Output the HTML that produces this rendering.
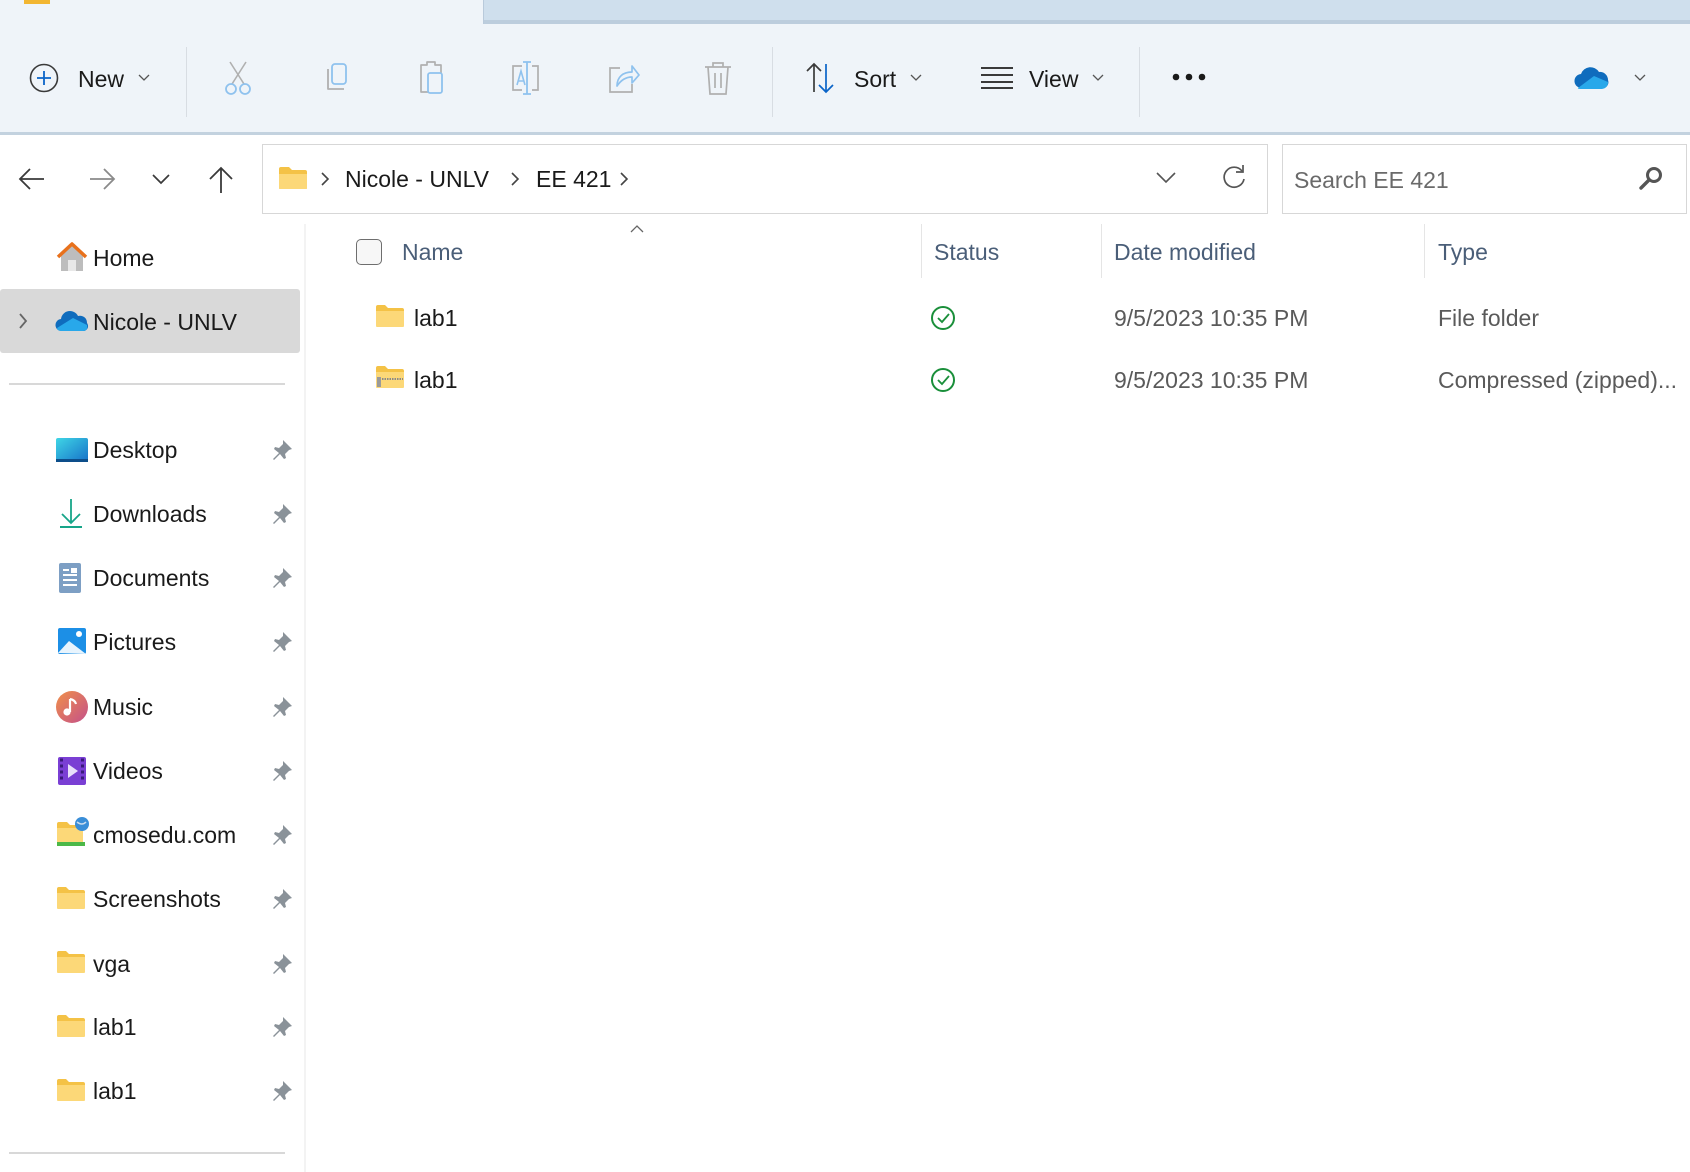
<!DOCTYPE html>
<html><head><meta charset="utf-8"><style>
*{margin:0;padding:0;box-sizing:border-box}
body{width:1690px;height:1172px;overflow:hidden;background:#fff;font-family:"Liberation Sans",sans-serif;font-size:23px;color:#1a1a1a;position:relative}
.a{position:absolute}
.t{position:absolute;line-height:30px;white-space:nowrap}
.sep{position:absolute;width:1px;background:#d8dde3}
.pin{position:absolute;left:271px;width:22px;height:22px}
.fold{position:absolute;width:28px;height:22px}
</style></head><body>
<!-- tab strip -->
<div class="a" style="left:0;top:0;width:1690px;height:24px;background:#cfdfed"></div>
<div class="a" style="left:0;top:-10px;width:484px;height:34px;background:#eff4f9;border-radius:0 0 0 0;border-right:1px solid #b9cadb"></div>
<div class="a" style="left:484px;top:20px;width:1206px;height:4px;background:#bccddd"></div>
<div class="a" style="left:24px;top:0;width:26px;height:4px;background:#f2b632"></div>
<!-- toolbar -->
<div class="a" style="left:0;top:24px;width:1690px;height:108px;background:#eff4f9"></div>
<div class="a" style="left:0;top:132px;width:1690px;height:3px;background:#c3d2df"></div>
<svg class="a" style="left:28px;top:62px" width="32" height="32" viewBox="0 0 32 32"><circle cx="16" cy="16" r="13.5" fill="none" stroke="#3a3a3a" stroke-width="1.6"/><path d="M16 9v14M9 16h14" stroke="#0a64c8" stroke-width="1.8"/></svg>
<div class="t" style="left:78px;top:64px">New</div>
<svg class="a" style="left:138px;top:74px" width="12" height="8"><path d="M1 1l5 5 5-5" fill="none" stroke="#555" stroke-width="1.3"/></svg>
<div class="sep" style="left:186px;top:47px;height:70px"></div>
<!-- cut -->
<svg class="a" style="left:222px;top:60px" width="32" height="36" viewBox="0 0 32 36"><path d="M8 2l14 22M24 2L10 24" stroke="#b0b0b0" stroke-width="1.6" fill="none"/><circle cx="9" cy="29" r="5" fill="none" stroke="#8fc2ee" stroke-width="1.8"/><circle cx="23" cy="29" r="5" fill="none" stroke="#8fc2ee" stroke-width="1.8"/></svg>
<!-- copy -->
<svg class="a" style="left:320px;top:62px" width="32" height="32" viewBox="0 0 32 32"><path d="M8 7v20h16" fill="none" stroke="#b0b0b0" stroke-width="1.8" stroke-linejoin="round"/><rect x="12" y="2" width="14" height="20" rx="3" fill="none" stroke="#8fc2ee" stroke-width="1.8"/></svg>
<!-- paste -->
<svg class="a" style="left:414px;top:60px" width="34" height="36" viewBox="0 0 34 36"><path d="M7 5h6v-3h8v3h6v27H7z" fill="none" stroke="#b0b0b0" stroke-width="1.7" stroke-linejoin="round"/><rect x="14" y="13" width="14" height="20" rx="2" fill="#eff4f9" stroke="#8fc2ee" stroke-width="1.8"/></svg>
<!-- rename -->
<svg class="a" style="left:508px;top:60px" width="36" height="36" viewBox="0 0 36 36"><path d="M14 6H5v24h9M24 6h6v24h-6" fill="none" stroke="#b0b0b0" stroke-width="1.7"/><path d="M19 2v32M15 2h8M15 34h8" stroke="#8fc2ee" stroke-width="1.8"/><path d="M9 25l4-14 4 14M10 21h6" fill="none" stroke="#8fc2ee" stroke-width="1.6"/></svg>
<!-- share -->
<svg class="a" style="left:606px;top:60px" width="34" height="36" viewBox="0 0 34 36"><path d="M14 8H4v24h22v-8" fill="none" stroke="#b0b0b0" stroke-width="1.7"/><path d="M11 26c0-9 6-14 15-14V6l7 9-7 8v-6c-6 0-11 3-15 9z" fill="none" stroke="#8fc2ee" stroke-width="1.7" stroke-linejoin="round"/></svg>
<!-- delete -->
<svg class="a" style="left:702px;top:60px" width="32" height="36" viewBox="0 0 32 36"><path d="M3 7h26M11 7V3h10v4M6 7l2 27h16l2-27M13 13v15M19 13v15" fill="none" stroke="#b0b0b0" stroke-width="1.7"/></svg>
<div class="sep" style="left:772px;top:47px;height:70px"></div>
<!-- sort -->
<svg class="a" style="left:804px;top:62px" width="34" height="32" viewBox="0 0 34 32"><path d="M10 30V2M3 9l7-7 7 7" fill="none" stroke="#3a3a3a" stroke-width="1.7"/><path d="M22 2v28M15 23l7 7 7-7" fill="none" stroke="#0a64c8" stroke-width="1.7"/></svg>
<div class="t" style="left:854px;top:64px">Sort</div>
<svg class="a" style="left:910px;top:74px" width="12" height="8"><path d="M1 1l5 5 5-5" fill="none" stroke="#555" stroke-width="1.3"/></svg>
<!-- view -->
<svg class="a" style="left:980px;top:66px" width="34" height="24"><path d="M1 2h32M1 9h32M1 16h32M1 22h32" stroke="#3a3a3a" stroke-width="2"/></svg>
<div class="t" style="left:1029px;top:64px">View</div>
<svg class="a" style="left:1092px;top:74px" width="12" height="8"><path d="M1 1l5 5 5-5" fill="none" stroke="#555" stroke-width="1.3"/></svg>
<div class="sep" style="left:1139px;top:47px;height:70px"></div>
<svg class="a" style="left:1172px;top:72px" width="34" height="10"><circle cx="4" cy="5" r="3.3" fill="#1a1a1a"/><circle cx="17" cy="5" r="3.3" fill="#1a1a1a"/><circle cx="30" cy="5" r="3.3" fill="#1a1a1a"/></svg>
<!-- onedrive -->
<svg class="a" style="left:1574px;top:66px" width="36" height="24" viewBox="0 0 36 24"><path d="M8 22a7 7 0 0 1-1-14 10 10 0 0 1 18-2 8 8 0 0 1 9 8 6 6 0 0 1-4 8z" fill="#0f6cbd"/><path d="M4 22 L20 10 L34 16 Q34 22 28 23 H8 Q3 23 4 22z" fill="#28a8ea"/></svg>
<svg class="a" style="left:1634px;top:74px" width="12" height="8"><path d="M1 1l5 5 5-5" fill="none" stroke="#555" stroke-width="1.3"/></svg>
<!-- nav row -->
<svg class="a" style="left:18px;top:167px" width="28" height="24"><path d="M26 12H3M12 2L2 12l10 10" fill="none" stroke="#3a3a3a" stroke-width="1.8"/></svg>
<svg class="a" style="left:88px;top:167px" width="28" height="24"><path d="M2 12h23M16 2l10 10-10 10" fill="none" stroke="#8a8a8a" stroke-width="1.8"/></svg>
<svg class="a" style="left:152px;top:174px" width="18" height="11"><path d="M1 1l8 8 8-8" fill="none" stroke="#3a3a3a" stroke-width="1.7"/></svg>
<svg class="a" style="left:208px;top:166px" width="26" height="28"><path d="M13 27V3M2 13L13 2l11 11" fill="none" stroke="#3a3a3a" stroke-width="1.8"/></svg>
<div class="a" style="left:262px;top:144px;width:1006px;height:70px;border:1px solid #d7d7d7;background:#fff"></div>
<svg class="a" style="left:278px;top:166px" width="30" height="24" viewBox="0 0 30 24"><path d="M1 3q0-2 2-2h8l3 3h13q2 0 2 2v16q0 1-1 1H2q-1 0-1-1z" fill="#f4c246"/><path d="M1 8h28v14q0 1-1 1H2q-1 0-1-1z" fill="#fcd878"/></svg>
<svg class="a" style="left:320px;top:172px" width="10" height="14"><path d="M2 1l6 6-6 6" fill="none" stroke="#444" stroke-width="1.6"/></svg>
<div class="t" style="left:345px;top:164px">Nicole - UNLV</div>
<svg class="a" style="left:510px;top:172px" width="10" height="14"><path d="M2 1l6 6-6 6" fill="none" stroke="#444" stroke-width="1.6"/></svg>
<div class="t" style="left:536px;top:164px">EE 421</div>
<svg class="a" style="left:619px;top:172px" width="10" height="14"><path d="M2 1l6 6-6 6" fill="none" stroke="#444" stroke-width="1.6"/></svg>
<svg class="a" style="left:1156px;top:172px" width="20" height="12"><path d="M1 1l9 9 9-9" fill="none" stroke="#555" stroke-width="1.6"/></svg>
<svg class="a" style="left:1220px;top:163px" width="28" height="28" viewBox="0 0 28 28"><path d="M22 8A10 10 0 1 0 24 16" fill="none" stroke="#555" stroke-width="1.7"/><path d="M23 2v7h-7" fill="none" stroke="#555" stroke-width="1.7"/></svg>
<div class="a" style="left:1282px;top:144px;width:405px;height:70px;border:1px solid #d7d7d7;background:#fff"></div>
<div class="t" style="left:1294px;top:165px;color:#6a6a6a">Search EE 421</div>
<svg class="a" style="left:1638px;top:166px" width="26" height="26" viewBox="0 0 26 26"><circle cx="16" cy="9" r="6.5" fill="none" stroke="#555" stroke-width="3"/><path d="M11 14L3 22" stroke="#555" stroke-width="3.4" stroke-linecap="round"/></svg>
<!-- sidebar -->
<div class="a" style="left:304px;top:224px;width:2px;height:948px;background:#f3f3f3"></div>
<svg class="a" style="left:56px;top:242px" width="32" height="30" viewBox="0 0 32 30"><path d="M5 14v15h22V14L16 4z" fill="#bdbdbd"/><rect x="12" y="18" width="8" height="11" fill="#e8e8e8"/><path d="M2 15L16 2l14 13" fill="none" stroke="#e8711c" stroke-width="3.5" stroke-linejoin="round"/></svg>
<div class="t" style="left:93px;top:243px">Home</div>
<div class="a" style="left:0;top:289px;width:300px;height:64px;background:#d9d9d9;border-radius:3px"></div>
<svg class="a" style="left:18px;top:313px" width="10" height="16"><path d="M2 1l6 7-6 7" fill="none" stroke="#666" stroke-width="1.8"/></svg>
<svg class="a" style="left:55px;top:309px" width="34" height="24" viewBox="0 0 34 24"><path d="M7 22a6 6 0 0 1-1-12 9 9 0 0 1 17-3 7 7 0 0 1 9 7 5 5 0 0 1-3 8z" fill="#0f6cbd"/><path d="M2 19L18 9l14 7q1 6-4 6H7q-5 0-5-3z" fill="#28a8ea"/></svg>
<div class="t" style="left:93px;top:307px">Nicole - UNLV</div>
<div class="a" style="left:9px;top:383px;width:276px;height:2px;background:#d8d8d8"></div>

<!-- Desktop -->
<svg class="a" style="left:55px;top:437px" width="34" height="26"><defs><linearGradient id="dg" x1="0" y1="0" x2="1" y2="1"><stop offset="0" stop-color="#3fd6e6"/><stop offset="1" stop-color="#1670c8"/></linearGradient></defs><rect x="1" y="1" width="32" height="24" rx="2" fill="url(#dg)"/><rect x="1" y="22" width="32" height="3" fill="#0d4e8a"/></svg>
<div class="t" style="left:93px;top:435px">Desktop</div>
<!-- Downloads -->
<svg class="a" style="left:58px;top:498px" width="26" height="30"><path d="M13 1v24M4 16l9 9 9-9" fill="none" stroke="#17a589" stroke-width="1.8"/><path d="M2 29h22" stroke="#17a589" stroke-width="2"/></svg>
<div class="t" style="left:93px;top:499px">Downloads</div>
<!-- Documents -->
<svg class="a" style="left:58px;top:562px" width="24" height="32"><rect x="1" y="1" width="22" height="30" rx="2" fill="#7d9fc4"/><path d="M5 8h6M5 13h14M5 18h14M5 23h14" stroke="#fff" stroke-width="2"/><rect x="13" y="6" width="6" height="5" fill="#fff"/></svg>
<div class="t" style="left:93px;top:563px">Documents</div>
<!-- Pictures -->
<svg class="a" style="left:57px;top:627px" width="30" height="28"><rect x="1" y="1" width="28" height="26" rx="2" fill="#1c8fe6"/><path d="M1 26L12 14l17 13z" fill="#e8f4fd"/><circle cx="22" cy="7" r="3" fill="#fff"/></svg>
<div class="t" style="left:93px;top:627px">Pictures</div>
<!-- Music -->
<svg class="a" style="left:55px;top:690px" width="34" height="34"><defs><linearGradient id="mg" x1="0" y1="0" x2="1" y2="1"><stop offset="0" stop-color="#f0904a"/><stop offset="1" stop-color="#c4508a"/></linearGradient></defs><circle cx="17" cy="17" r="16" fill="url(#mg)"/><path d="M15 9v13" stroke="#fff" stroke-width="2.2"/><circle cx="12" cy="22" r="3.6" fill="#fff"/><path d="M15 9q5 1 6 5" fill="none" stroke="#fff" stroke-width="2.2"/></svg>
<div class="t" style="left:93px;top:692px">Music</div>
<!-- Videos -->
<svg class="a" style="left:57px;top:756px" width="30" height="30"><rect x="1" y="1" width="28" height="28" rx="2" fill="#7a3fd4"/><path d="M3 4h3M3 10h3M3 16h3M3 22h3M24 4h3M24 10h3M24 16h3M24 22h3" stroke="#3a1a7a" stroke-width="3"/><path d="M11 8l10 7-10 7z" fill="#e8e0fa"/></svg>
<div class="t" style="left:93px;top:756px">Videos</div>
<!-- cmosedu -->
<svg class="a" style="left:56px;top:816px" width="34" height="32"><path d="M1 8q0-2 2-2h8l3 3h12v20H1z" fill="#f4c246"/><path d="M1 12h26v17H1z" fill="#fcd878"/><rect x="1" y="26" width="28" height="4" fill="#4cb848"/><circle cx="26" cy="8" r="7" fill="#3a8ed8"/><path d="M21 6q5 4 9 0" fill="none" stroke="#cde" stroke-width="1.5"/></svg>
<div class="t" style="left:93px;top:820px">cmosedu.com</div>
<!-- folders -->
<svg class="fold" style="left:57px;top:887px" viewBox="0 0 28 22"><path d="M0 2q0-2 2-2h7l3 3h14q2 0 2 2v16H0z" fill="#f4c246"/><path d="M0 6h28v15q0 1-1 1H1q-1 0-1-1z" fill="#fcd878"/></svg>
<div class="t" style="left:93px;top:884px">Screenshots</div>
<svg class="fold" style="left:57px;top:951px" viewBox="0 0 28 22"><path d="M0 2q0-2 2-2h7l3 3h14q2 0 2 2v16H0z" fill="#f4c246"/><path d="M0 6h28v15q0 1-1 1H1q-1 0-1-1z" fill="#fcd878"/></svg>
<div class="t" style="left:93px;top:949px">vga</div>
<svg class="fold" style="left:57px;top:1015px" viewBox="0 0 28 22"><path d="M0 2q0-2 2-2h7l3 3h14q2 0 2 2v16H0z" fill="#f4c246"/><path d="M0 6h28v15q0 1-1 1H1q-1 0-1-1z" fill="#fcd878"/></svg>
<div class="t" style="left:93px;top:1012px">lab1</div>
<svg class="fold" style="left:57px;top:1079px" viewBox="0 0 28 22"><path d="M0 2q0-2 2-2h7l3 3h14q2 0 2 2v16H0z" fill="#f4c246"/><path d="M0 6h28v15q0 1-1 1H1q-1 0-1-1z" fill="#fcd878"/></svg>
<div class="t" style="left:93px;top:1076px">lab1</div>
<div class="a" style="left:9px;top:1152px;width:276px;height:2px;background:#d8d8d8"></div>
<!-- pins -->
<svg style="display:none"><symbol id="pin" viewBox="0 0 22 22"><path d="M12 1l9 9-3 1-4 4 1 4-2 1-4-5-6 6-1-1 6-6-5-4 1-2 4 1 4-4z" fill="#8a9299"/></symbol></svg>
<svg class="pin" style="top:439px"><use href="#pin"/></svg>
<svg class="pin" style="top:503px"><use href="#pin"/></svg>
<svg class="pin" style="top:567px"><use href="#pin"/></svg>
<svg class="pin" style="top:631px"><use href="#pin"/></svg>
<svg class="pin" style="top:696px"><use href="#pin"/></svg>
<svg class="pin" style="top:760px"><use href="#pin"/></svg>
<svg class="pin" style="top:824px"><use href="#pin"/></svg>
<svg class="pin" style="top:888px"><use href="#pin"/></svg>
<svg class="pin" style="top:953px"><use href="#pin"/></svg>
<svg class="pin" style="top:1016px"><use href="#pin"/></svg>
<svg class="pin" style="top:1080px"><use href="#pin"/></svg>
<!-- content header -->
<div class="a" style="left:356px;top:239px;width:26px;height:26px;border:1.5px solid #6e6e6e;border-radius:5px;background:#f7f7f7"></div>
<div class="t" style="left:402px;top:237px;color:#4a5e78">Name</div>
<svg class="a" style="left:630px;top:224px" width="14" height="9"><path d="M1 8l6-6 6 6" fill="none" stroke="#666" stroke-width="1.3"/></svg>
<div class="sep" style="left:921px;top:224px;height:54px;background:#e5e5e5"></div>
<div class="sep" style="left:1101px;top:224px;height:54px;background:#e5e5e5"></div>
<div class="sep" style="left:1424px;top:224px;height:54px;background:#e5e5e5"></div>
<div class="t" style="left:934px;top:237px;color:#4a5e78">Status</div>
<div class="t" style="left:1114px;top:237px;color:#4a5e78">Date modified</div>
<div class="t" style="left:1438px;top:237px;color:#4a5e78">Type</div>
<!-- rows -->
<svg class="fold" style="left:376px;top:305px" viewBox="0 0 28 22"><path d="M0 2q0-2 2-2h7l3 3h14q2 0 2 2v16H0z" fill="#f4c246"/><path d="M0 6h28v15q0 1-1 1H1q-1 0-1-1z" fill="#fcd878"/></svg>
<div class="t" style="left:414px;top:303px">lab1</div>
<svg class="a" style="left:930px;top:305px" width="26" height="26"><circle cx="13" cy="13" r="11" fill="none" stroke="#1a8f3a" stroke-width="2"/><path d="M8 13l4 4 7-8" fill="none" stroke="#1a8f3a" stroke-width="1.8"/></svg>
<div class="t" style="left:1114px;top:303px;color:#5a5a5a">9/5/2023 10:35 PM</div>
<div class="t" style="left:1438px;top:303px;color:#5a5a5a">File folder</div>
<svg class="fold" style="left:376px;top:366px" viewBox="0 0 28 22"><path d="M0 2q0-2 2-2h7l3 3h14q2 0 2 2v16H0z" fill="#f4c246"/><path d="M0 6h28v15q0 1-1 1H1q-1 0-1-1z" fill="#fcd878"/><path d="M1 13h26" stroke="#8a8a8a" stroke-width="2" stroke-dasharray="1.5 1"/><rect x="1" y="11" width="4" height="10" fill="#9a9a9a"/></svg>
<div class="t" style="left:414px;top:365px">lab1</div>
<svg class="a" style="left:930px;top:367px" width="26" height="26"><circle cx="13" cy="13" r="11" fill="none" stroke="#1a8f3a" stroke-width="2"/><path d="M8 13l4 4 7-8" fill="none" stroke="#1a8f3a" stroke-width="1.8"/></svg>
<div class="t" style="left:1114px;top:365px;color:#5a5a5a">9/5/2023 10:35 PM</div>
<div class="t" style="left:1438px;top:365px;color:#5a5a5a">Compressed (zipped)...</div>
</body></html>
